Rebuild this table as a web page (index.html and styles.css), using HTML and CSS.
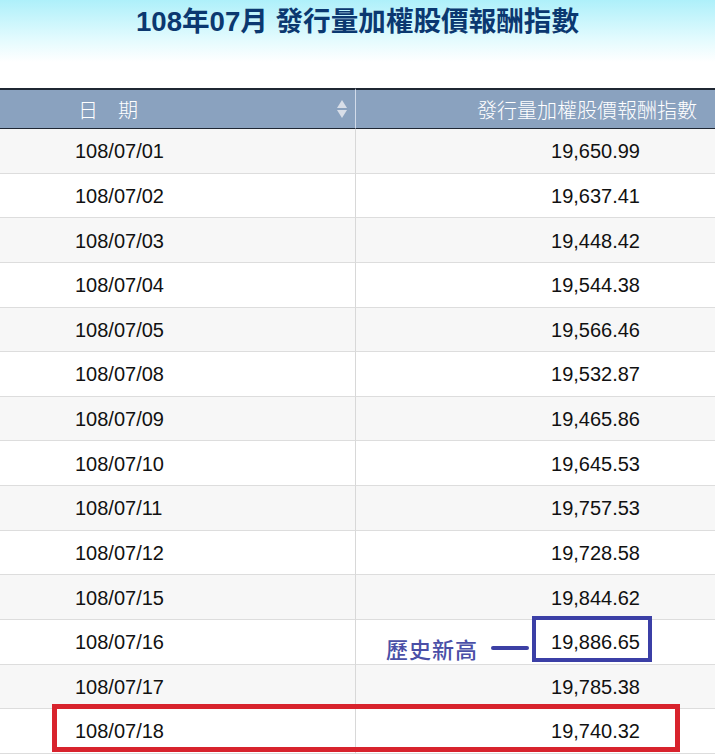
FILE: index.html
```html
<!DOCTYPE html>
<html lang="zh-Hant">
<head>
    <meta charset="UTF-8">
    <meta name="viewport" content="width=device-width, initial-scale=1.0">
    <title>108年07月 發行量加權股價報酬指數</title>
    <link rel="stylesheet" href="styles.css">
</head>
<body>
    <div class="header-band">
        <h1>108年07月 發行量加權股價報酬指數</h1>
    </div>
    <div class="sheet">
        <table class="index-table">
            <colgroup>
                <col class="col-date">
                <col class="col-value">
            </colgroup>
            <thead>
                <tr>
                    <th class="date-head">
                        日　期
                        <svg class="sort-icon" width="10" height="20" viewBox="0 0 10 20">
                            <polygon points="5,1 10,9 0,9" fill="#d8dee8"/>
                            <polygon points="0,11 10,11 5,19" fill="#d8dee8"/>
                        </svg>
                    </th>
                    <th class="value-head">發行量加權股價報酬指數</th>
                </tr>
            </thead>
            <tbody>
                <tr><td>108/07/01</td><td class="num">19,650.99</td></tr>
                <tr><td>108/07/02</td><td class="num">19,637.41</td></tr>
                <tr><td>108/07/03</td><td class="num">19,448.42</td></tr>
                <tr><td>108/07/04</td><td class="num">19,544.38</td></tr>
                <tr><td>108/07/05</td><td class="num">19,566.46</td></tr>
                <tr><td>108/07/08</td><td class="num">19,532.87</td></tr>
                <tr><td>108/07/09</td><td class="num">19,465.86</td></tr>
                <tr><td>108/07/10</td><td class="num">19,645.53</td></tr>
                <tr><td>108/07/11</td><td class="num">19,757.53</td></tr>
                <tr><td>108/07/12</td><td class="num">19,728.58</td></tr>
                <tr><td>108/07/15</td><td class="num">19,844.62</td></tr>
                <tr><td>108/07/16</td><td class="num">19,886.65</td></tr>
                <tr><td>108/07/17</td><td class="num">19,785.38</td></tr>
                <tr><td>108/07/18</td><td class="num">19,740.32</td></tr>
            </tbody>
        </table>

        <!-- hand-drawn notes over the table -->
        <div class="note-label">歷史新高</div>
        <div class="note-dash"></div>
        <div class="note-box high"></div>
        <div class="note-box latest"></div>
    </div>
</body>
</html>
```

FILE: styles.css
```css
body {
    margin: 0;
    padding: 0;
    background: #fff;
    font-family: "Liberation Sans", "Noto Sans CJK TC", sans-serif;
}
.header-band {
    height: 88px;
    background: linear-gradient(to bottom, #aef0fa 0px, #e4fbfe 40px, #ffffff 62px);
}
h1 {
    margin: 0;
    padding-top: 5px;
    text-align: center;
    font-size: 27.6px;
    font-weight: bold;
    line-height: 34px;
    color: #0b3870;
    font-family: "Liberation Sans", "Noto Sans CJK TC", sans-serif;
}
.sheet {
    position: relative;
}
.index-table {
    width: 715px;
    table-layout: fixed;
    border-collapse: separate;
    border-spacing: 0;
}
.col-date {
    width: 356px;
}
.index-table th {
    box-sizing: border-box;
    height: 41px;
    padding: 0;
    background: #8aa2bf;
    color: #fff;
    font-family: "Noto Sans CJK TC", sans-serif;
    font-size: 20px;
    font-weight: 300;
    border-top: 2px solid #1f2733;
    border-bottom: 1px solid #1f2733;
}
.date-head {
    position: relative;
    text-align: left;
    padding-left: 78px !important;
    border-right: 1px solid #d3dcea;
}
.sort-icon {
    position: absolute;
    right: 8px;
    top: 9px;
}
.value-head {
    text-align: right;
    padding-right: 18px !important;
}
.index-table td {
    box-sizing: border-box;
    height: 44.64px;
    padding: 2px 0 0 75px;
    font-size: 20px;
    color: #111;
    border-bottom: 1px solid #dddddd;
}
.index-table td:first-child {
    border-right: 1px solid #d8d8d8;
}
.index-table td.num {
    text-align: right;
    padding: 2px 75px 0 0;
}
.index-table tbody tr:nth-child(odd) td {
    background: #f7f7f7;
}
.note-label {
    position: absolute;
    left: 386px;
    top: 544px;
    font-family: "Noto Sans CJK TC", sans-serif;
    font-size: 22px;
    font-weight: 500;
    letter-spacing: 1px;
    line-height: 32px;
    color: #4a4fa7;
}
.note-dash {
    position: absolute;
    left: 491px;
    top: 558px;
    width: 38px;
    height: 4px;
    border-radius: 2px;
    background: #3c40a4;
}
.note-box {
    position: absolute;
    box-sizing: border-box;
}
.note-box.high {
    left: 532px;
    top: 528px;
    width: 120px;
    height: 46px;
    border: 4px solid #3b3fa6;
}
.note-box.latest {
    left: 52px;
    top: 616px;
    width: 628px;
    height: 48px;
    border: 5px solid #d8232d;
}
```
